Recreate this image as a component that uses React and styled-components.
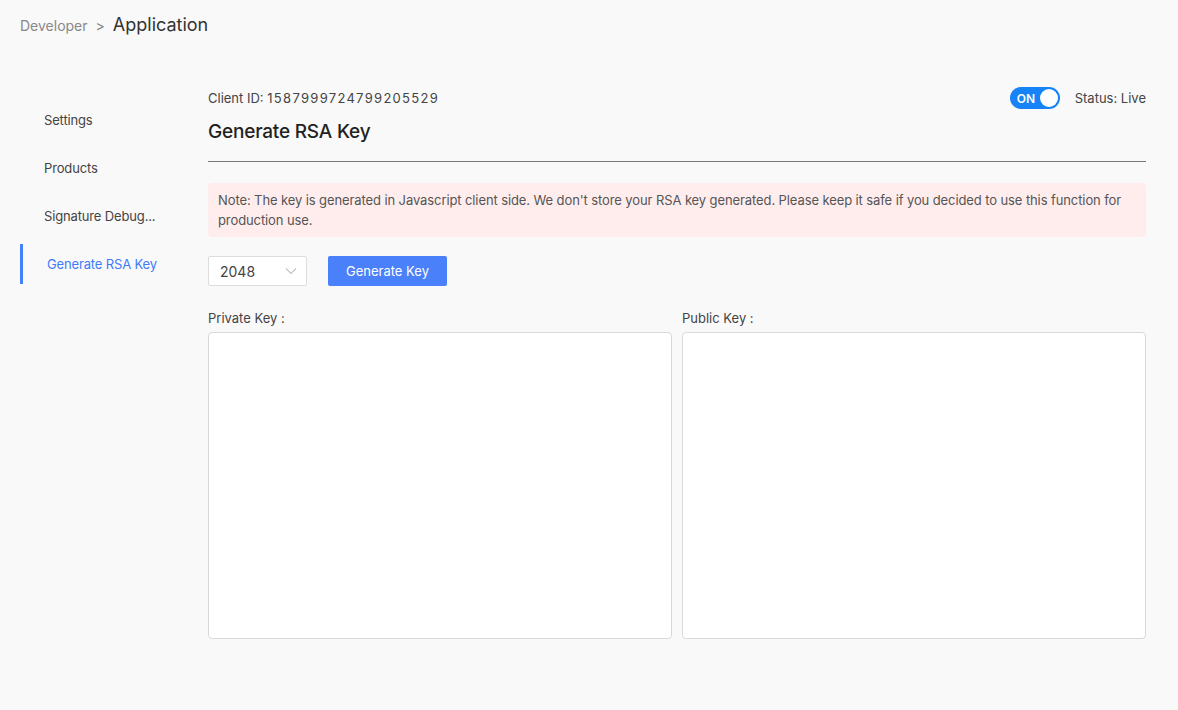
import React, { useState } from 'react';
import styled, { createGlobalStyle } from 'styled-components';

const GlobalStyle = createGlobalStyle`
  html, body {
    margin: 0;
    padding: 0;
    background: #f9f9f9;
    font-family: Inter, "Open Sans", "Liberation Sans", sans-serif;
    color: #333;
  }
  * { box-sizing: border-box; }
`;

const menu = ['Settings', 'Products', 'Signature Debug...', 'Generate RSA Key'];

export default function App() {
  const [active, setActive] = useState(3);
  const [live, setLive] = useState(true);
  const [bits, setBits] = useState('2048');

  return (
    <Page>
      <GlobalStyle />
      <Breadcrumb>
        <Crumb>Developer</Crumb>
        <Sep>&gt;</Sep>
        <CurrentCrumb>Application</CurrentCrumb>
      </Breadcrumb>

      <Body>
        <Sidebar>
          {menu.map((m, i) => (
            <MenuItem key={m} active={i === active} onClick={() => setActive(i)}>
              {m}
            </MenuItem>
          ))}
        </Sidebar>

        <Main>
          <HeaderRow>
            <ClientId>
              Client ID: <Digits>1587999724799205529</Digits>
            </ClientId>
            <StatusWrap>
              <Toggle on={live} onClick={() => setLive(!live)}>
                <ToggleText>{live ? 'ON' : 'OFF'}</ToggleText>
                <Knob />
              </Toggle>
              <StatusText>Status: {live ? 'Live' : 'Off'}</StatusText>
            </StatusWrap>
          </HeaderRow>

          <Title>Generate RSA Key</Title>

          <Note>
            Note: The key is generated in Javascript client side. We don't store your RSA key generated. Please keep it safe if you decided to use this function for production use.
          </Note>

          <Controls>
            <SelectBox>
              <Select value={bits} onChange={e => setBits(e.target.value)}>
                <option value="1024">1024</option>
                <option value="2048">2048</option>
                <option value="4096">4096</option>
              </Select>
              <Chevron width="12" height="8" viewBox="0 0 12 8">
                <path d="M1 1.5 L6 6.5 L11 1.5" fill="none" stroke="#c4c4c4" strokeWidth="1.2" />
              </Chevron>
            </SelectBox>
            <PrimaryButton>Generate Key</PrimaryButton>
          </Controls>

          <KeyGrid>
            <KeyColumn>
              <KeyLabel>Private Key :</KeyLabel>
              <KeyArea />
            </KeyColumn>
            <KeyColumn>
              <KeyLabel>Public Key :</KeyLabel>
              <KeyArea />
            </KeyColumn>
          </KeyGrid>
        </Main>
      </Body>
    </Page>
  );
}

const Page = styled.div`
  width: 100%;
  min-height: 710px;
`;

const Breadcrumb = styled.div`
  display: flex;
  align-items: baseline;
  padding: 14px 20px 0;
  height: 40px;
`;

const Crumb = styled.span`
  font-size: 14px;
  color: #888;
`;

const Sep = styled.span`
  font-size: 14px;
  color: #888;
  margin: 0 8px;
`;

const CurrentCrumb = styled.span`
  font-size: 18px;
  color: #333;
`;

const Body = styled.div`
  display: flex;
  padding: 47px 32px 0 20px;
`;

const Sidebar = styled.nav`
  width: 188px;
  flex-shrink: 0;
  display: flex;
  flex-direction: column;
  gap: 8px;
  padding-top: 13px;
`;

const MenuItem = styled.div`
  height: 40px;
  display: flex;
  align-items: center;
  font-size: 13px;
  letter-spacing: -0.15px;
  cursor: pointer;
  padding-left: 24px;
  border-left: 3px solid ${p => (p.active ? '#4380fa' : 'transparent')};
  margin-left: ${p => (p.active ? '0' : '-3px')};
  color: ${p => (p.active ? '#3e7bfa' : '#444')};
`;

const Main = styled.main`
  flex: 1;
  display: flex;
  flex-direction: column;
`;

const HeaderRow = styled.div`
  display: flex;
  justify-content: space-between;
  align-items: center;
  height: 22px;
`;

const ClientId = styled.span`
  font-size: 13px;
  color: #444;
`;

const Digits = styled.span`
  letter-spacing: 1.3px;
`;

const StatusWrap = styled.div`
  display: flex;
  align-items: center;
  gap: 15px;
`;

const Toggle = styled.div`
  width: 50px;
  height: 22px;
  border-radius: 11px;
  background: ${p => (p.on ? '#1684f7' : '#bbb')};
  display: flex;
  align-items: center;
  justify-content: space-between;
  flex-direction: ${p => (p.on ? 'row' : 'row-reverse')};
  padding: 0 2px 0 7px;
  cursor: pointer;
`;

const ToggleText = styled.span`
  font-size: 12px;
  font-weight: 600;
  color: #fff;
`;

const Knob = styled.span`
  width: 18px;
  height: 18px;
  border-radius: 50%;
  background: #fff;
`;

const StatusText = styled.span`
  font-size: 13px;
  color: #444;
`;

const Title = styled.h2`
  margin: 11px 0 0;
  font-size: 19px;
  line-height: 24px;
  font-weight: 500;
  letter-spacing: -0.2px;
  color: #222;
  padding-bottom: 17px;
  border-bottom: 1px solid #777;
`;

const Note = styled.div`
  margin-top: 21px;
  background: #ffeded;
  border-radius: 4px;
  padding: 7px 10px;
  font-size: 13px;
  line-height: 20px;
  letter-spacing: -0.1px;
  color: #555;
`;

const Controls = styled.div`
  display: flex;
  align-items: center;
  gap: 21px;
  margin-top: 19px;
`;

const SelectBox = styled.div`
  position: relative;
  width: 99px;
  height: 30px;
`;

const Select = styled.select`
  appearance: none;
  width: 100%;
  height: 100%;
  border: 1px solid #ddd;
  border-radius: 2px;
  background: #fff;
  font-family: inherit;
  font-size: 14px;
  color: #444;
  padding: 0 11px;
  outline: none;
`;

const Chevron = styled.svg`
  position: absolute;
  right: 10px;
  top: 11px;
  pointer-events: none;
`;

const PrimaryButton = styled.button`
  width: 119px;
  height: 30px;
  border: none;
  border-radius: 2px;
  background: #4a80fa;
  color: #fff;
  font-family: inherit;
  font-size: 13px;
  cursor: pointer;
`;

const KeyGrid = styled.div`
  display: grid;
  grid-template-columns: 1fr 1fr;
  gap: 10px;
  margin-top: 24px;
`;

const KeyColumn = styled.div`
  display: flex;
  flex-direction: column;
`;

const KeyLabel = styled.label`
  font-size: 13px;
  line-height: 16px;
  color: #444;
  margin-bottom: 6px;
`;

const KeyArea = styled.textarea`
  height: 307px;
  resize: none;
  border: 1px solid #d9d9d9;
  border-radius: 4px;
  background: #fff;
  font-family: "Liberation Mono", monospace;
  font-size: 12px;
  padding: 8px;
  outline: none;
`;
